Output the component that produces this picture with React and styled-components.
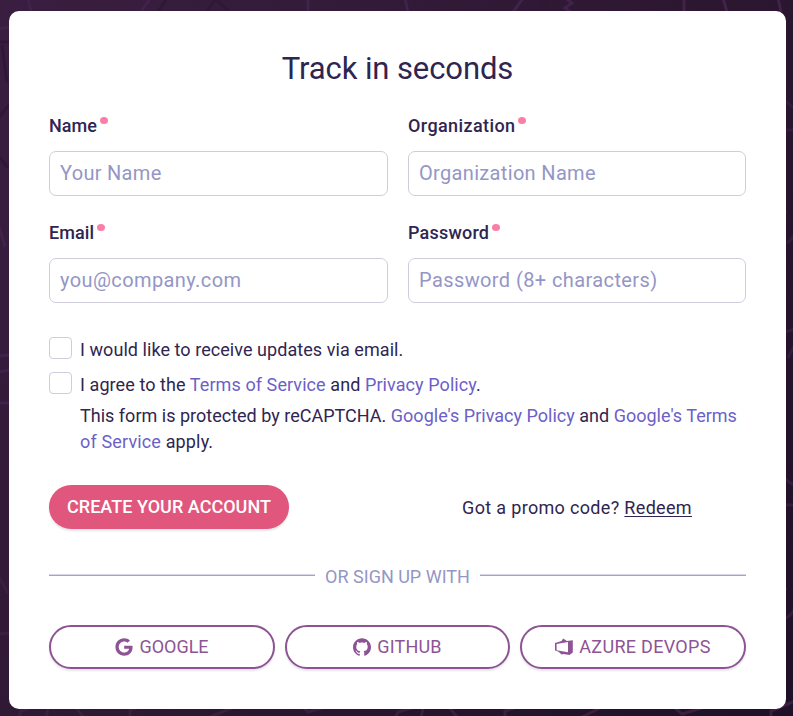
import React from "react"
import styled, { createGlobalStyle } from "styled-components"
import { SiGithub } from "react-icons/si"
import { FaGoogle } from "react-icons/fa"

const colors = {
  text: "#2f2551",
  link: "#6c5fc7",
  muted: "#9496c6",
  inputBorder: "#cfcddc",
  pink: "#fb7ea8",
  primary: "#e1567c",
  purple: "#8d5494",
}

const GlobalStyle = createGlobalStyle`
  * {
    box-sizing: border-box;
  }
  body {
    margin: 0;
    background: #2a1730;
    color: ${colors.text};
    font-family: Roboto, "Liberation Sans", sans-serif;
    font-size: 18px;
  }
`

const Page = styled.main`
  position: relative;
  height: 716px;
  padding: 11px 7px 7px 9px;
  overflow: hidden;
  background: linear-gradient(125deg, #3a1e41 0%, #2c1731 55%, #1e1127 100%);
`

const Pattern = styled.svg`
  position: absolute;
  inset: 0;
  fill: none;
  stroke-width: 3;
`

const Card = styled.form`
  position: relative;
  height: 698px;
  padding: 38px 40px 0;
  background: #fff;
  border-radius: 10px;
`

const Title = styled.h1`
  margin: 0;
  font-size: 31px;
  font-weight: 400;
  line-height: 40px;
  letter-spacing: -0.1px;
  text-align: center;
`

const Fields = styled.div`
  display: grid;
  grid-template-columns: 339px 338px;
  gap: 20px;
  margin-top: 15px;
`

const Field = styled.div`
  height: 87px;
`

const Label = styled.label`
  display: flex;
  height: 47px;
  padding-top: 10px;
  font-size: 18px;
  font-weight: 500;
  line-height: 24px;
  letter-spacing: ${props => props.$spacing};

  &::after {
    content: "";
    width: 8px;
    height: 7px;
    margin: 3px 0 0 3px;
    border-radius: 50%;
    background: ${colors.pink};
  }
`

const Input = styled.input`
  display: block;
  width: 100%;
  height: 45px;
  padding: 0 10px 1px;
  border: 1px solid ${colors.inputBorder};
  border-radius: 7px;
  outline: 0;
  background: #fff;
  color: ${colors.text};
  font-family: inherit;
  font-size: 20px;
  letter-spacing: ${props => props.$spacing};

  &::placeholder {
    color: ${colors.muted};
    opacity: 1;
  }
`

const Consents = styled.div`
  margin-top: 37px;
`

const Consent = styled.label`
  display: flex;
  height: 35px;
  gap: 8px;
  line-height: 30px;
  letter-spacing: ${props => props.$spacing};
`

const Checkbox = styled.input`
  flex: none;
  appearance: none;
  width: 23px;
  height: 22px;
  margin: 2px 0 0;
  border: 1px solid ${colors.inputBorder};
  border-radius: 4px;
  background: #fff;
`

const Captcha = styled.p`
  margin: -2px 0 0 31px;
  line-height: 26px;
  white-space: nowrap;
`

const Line = styled.span`
  display: block;
  letter-spacing: ${props => props.$spacing};
`

const TextLink = styled.a`
  color: ${colors.link};
  cursor: pointer;
`

const Actions = styled.div`
  display: flex;
  justify-content: space-between;
  align-items: center;
  margin-top: 30px;
  padding-right: 54px;
`

const SubmitButton = styled.button`
  width: 240px;
  height: 44px;
  padding: 0 0 2px;
  border: 0;
  border-radius: 22px;
  background: ${colors.primary};
  box-shadow: 0 2px 2px rgba(47, 37, 81, 0.12);
  color: #fff;
  font-family: inherit;
  font-size: 18px;
  font-weight: 500;
  letter-spacing: 0.03px;
  white-space: nowrap;
`

const Promo = styled.div`
  letter-spacing: 0.33px;

  a {
    color: inherit;
    text-decoration: underline;
    text-underline-offset: 2px;
  }
`

const Divider = styled.div`
  display: flex;
  align-items: center;
  gap: 10px;
  height: 22px;
  margin: 36px 0 38px;
  color: ${colors.muted};
  white-space: nowrap;

  &::before,
  &::after {
    content: "";
    flex: 1;
    height: 2px;
    margin-bottom: 2px;
    background: linear-gradient(#d7d7ea 50%, #a3a2c8 50%);
  }
`

const Providers = styled.div`
  display: grid;
  grid-template-columns: 226px 225px 226px;
  gap: 10px;
`

const ProviderButton = styled.button`
  display: flex;
  align-items: center;
  justify-content: center;
  gap: 6px;
  height: 44px;
  padding: 0;
  border: 2px solid ${colors.purple};
  border-radius: 22px;
  background: #fff;
  box-shadow: 0 2px 2px rgba(47, 37, 81, 0.12);
  color: ${colors.purple};
  font-family: inherit;
  font-size: 18px;
  letter-spacing: ${props => props.$spacing};

  svg {
    flex: none;
    width: 18px;
    height: 18px;
  }

  span {
    padding-bottom: 2px;
  }
`

const AzureIcon = () => (
  <svg viewBox="0 -0.5 18 18" fill="currentColor" fillRule="evenodd">
    <path d="M0 4.5 6.6 2.4 8.2 0 11.8 2.6 17.8 1.8V14L14.5 16.4 8.5 15.6 6.6 16 3.2 13 0 12zM1.6 5.4V11.8L13 13.7V3.6z" />
  </svg>
)

const Background = () => (
  <Pattern width="793" height="716">
    <path
      stroke="#40224a"
      d="M28-2l3 14M151-3l-10 15M308-2v14M405-2l3 14M524-3l-11 15M565-2l7 5-7 5 7 5M684-2v14M723-2l4 14M778-2l3 14M-2 29l13-2M-2 223l7 24M-2 356l13-1M-2 372l12-2M-2 403h13"
    />
    <path
      stroke="#2f1836"
      d="M158 12l8-12M207 11l8-12 14 12M540 11l8-12M620-2l13 13M-2 42h12M2 45l5 38M-2 118l12-14M-2 155l10 13"
    />
    <path
      stroke="#3b1f43"
      d="M-2 575l10 18M-2 634l12-1M19 716l2-5 20-7M75 706l9 12M46 718l3-14M130 718v-8l22-7M208 718l28-12M302 706l6 6 17-5M395 718l3-6 20-6M421 718l3-14M449 707l8 10M505 717v-6l22-7M582 717l22-11M675 708l7 6 20-6M771 717v-6l24-10"
    />
    <path
      stroke="#351b3e"
      d="M785 101l10 8M785 130h10M785 212l2 0M787 243q6-4 8-10M785 332l10-3M788 358l7-14M785 479l10 7M785 505h10M785 589l2 0M786 618q6-3 9-10"
    />
  </Pattern>
)

const FormField = ({ label, labelSpacing, spacing, id, type = "text", placeholder }) => (
  <Field>
    <Label htmlFor={id} $spacing={labelSpacing}>{label}</Label>
    <Input id={id} type={type} placeholder={placeholder} $spacing={spacing} />
  </Field>
)

export default function App() {
  return (
    <>
      <GlobalStyle />
      <Page>
        <Background />
        <Card>
          <Title>Track in seconds</Title>
          <Fields>
            <FormField id="name" label="Name" labelSpacing="0.05px" placeholder="Your Name" spacing="0.3px" />
            <FormField id="org" label="Organization" labelSpacing="0.4px" placeholder="Organization Name" spacing="0.33px" />
            <FormField id="email" type="email" label="Email" labelSpacing="0.1px" placeholder="you@company.com" spacing="0.4px" />
            <FormField id="password" type="password" label="Password" labelSpacing="0.2px" placeholder="Password (8+ characters)" spacing="0.4px" />
          </Fields>
          <Consents>
            <Consent $spacing="0.06px">
              <Checkbox type="checkbox" />
              <span>I would like to receive updates via email.</span>
            </Consent>
            <Consent $spacing="0.08px">
              <Checkbox type="checkbox" />
              <span>
                I agree to the <TextLink>Terms of Service</TextLink> and <TextLink>Privacy Policy</TextLink>.
              </span>
            </Consent>
            <Captcha>
              <Line $spacing="0.01px">
                This form is protected by reCAPTCHA. <TextLink>Google's Privacy Policy</TextLink> and <TextLink>Google's Terms</TextLink>
              </Line>
              <Line $spacing="0.15px">
                <TextLink>of Service</TextLink> apply.
              </Line>
            </Captcha>
          </Consents>
          <Actions>
            <SubmitButton type="button">CREATE YOUR ACCOUNT</SubmitButton>
            <Promo>
              Got a promo code? <a href="#redeem">Redeem</a>
            </Promo>
          </Actions>
          <Divider>OR SIGN UP WITH</Divider>
          <Providers>
            <ProviderButton type="button" $spacing="0">
              <FaGoogle /> <span>GOOGLE</span>
            </ProviderButton>
            <ProviderButton type="button" $spacing="0.15px">
              <SiGithub /> <span>GITHUB</span>
            </ProviderButton>
            <ProviderButton type="button" $spacing="0.3px">
              <AzureIcon /> <span>AZURE DEVOPS</span>
            </ProviderButton>
          </Providers>
        </Card>
      </Page>
    </>
  )
}
